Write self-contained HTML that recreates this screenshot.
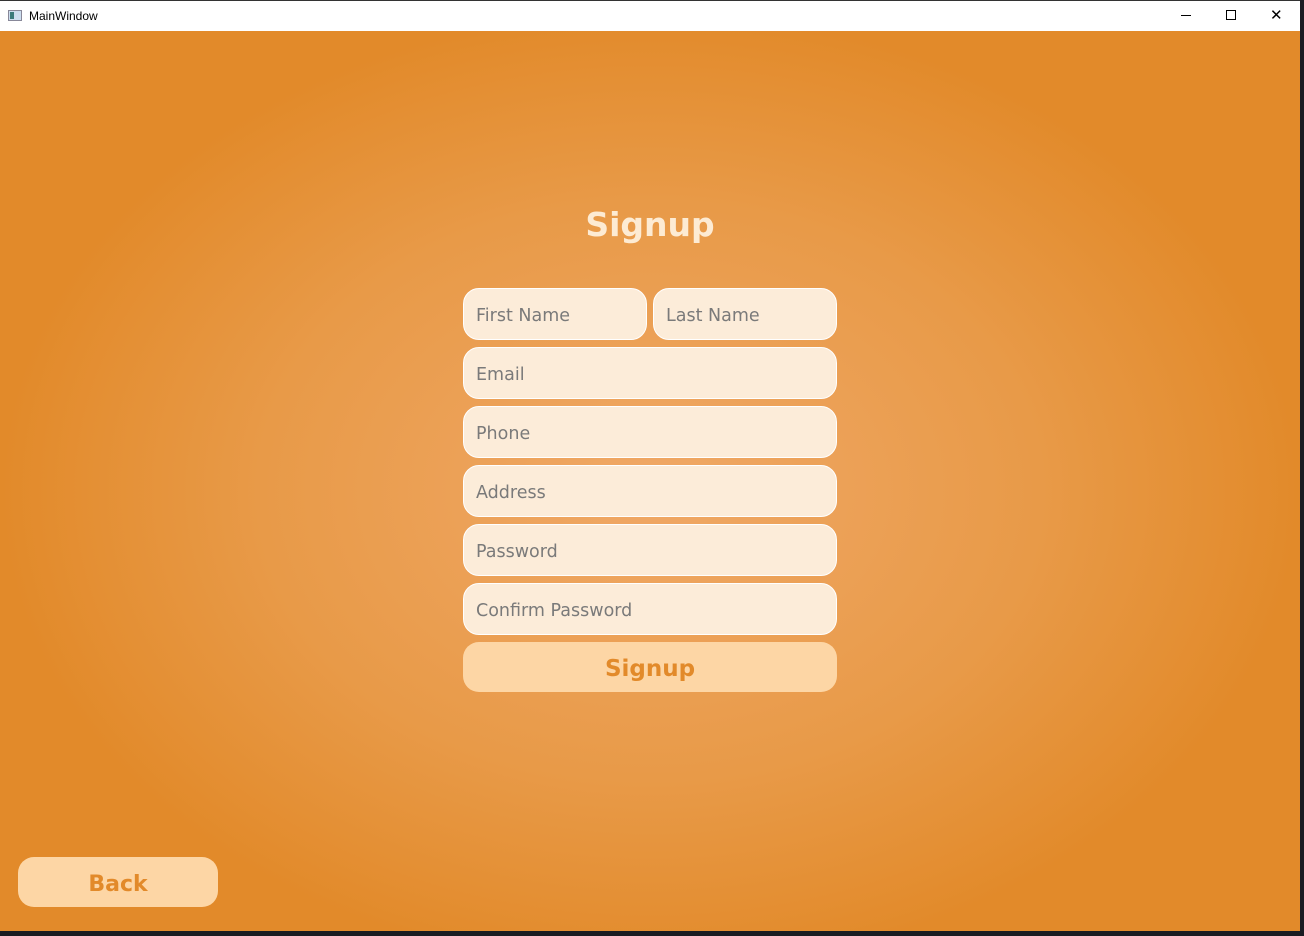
<!DOCTYPE html>
<html><head><meta charset="utf-8"><style>
*{margin:0;padding:0;box-sizing:border-box}
body{width:1304px;height:936px;background:#1a1c22;position:relative;overflow:hidden;font-family:"Liberation Sans",sans-serif}
#win{position:absolute;left:0;top:0;width:1300px;height:931px;background:#fff;border-top:1px solid #333}
#title{position:absolute;left:0;top:0;width:1300px;height:30px;background:#fff;font-size:12px}
#title .t{position:absolute;left:29px;top:8px;color:#000}
#title .ic{position:absolute;left:8px;top:9px;width:14px;height:11px;border:1px solid #889;background:#cde}
#title .ic:before{content:"";position:absolute;left:1px;top:1px;width:4px;height:7px;background:#3a7a7a}
#content{position:absolute;left:0;top:30px;width:1300px;height:900px;background:radial-gradient(ellipse 650px 480px at 650px 460px,#f0a866 0%,#e89a48 60%,#e28a2a 100%)}
.f{position:absolute;height:52px;background:#fcecd9;border:1px solid #fff;border-radius:16px;color:#7a7a7a;padding-left:12px;line-height:55px;font-family:"DejaVu Sans",sans-serif;font-size:17.5px}
.b{position:absolute;background:#fdd6a5;border-radius:16px;color:#e28a2a;font-weight:bold;text-align:center;font-family:"DejaVu Sans",sans-serif}
h1{position:absolute;left:0;width:1300px;text-align:center;top:174px;color:#fdebd3;font-size:33px;font-family:"DejaVu Sans",sans-serif}
</style></head><body>
<div id="win">
<div id="title"><div class="ic"></div><span class="t">MainWindow</span>
<span style="position:absolute;left:1181px;top:14px;width:10px;height:1px;background:#000"></span>
<span style="position:absolute;left:1226px;top:9px;width:10px;height:10px;border:1px solid #000"></span>
<span style="position:absolute;left:1270px;top:5px;font-size:15px;color:#000">✕</span>
</div>
<div id="content">
<h1>Signup</h1>
<div class="f" style="left:463px;top:257px;width:184px">First Name</div>
<div class="f" style="left:653px;top:257px;width:184px">Last Name</div>
<div class="f" style="left:463px;top:316px;width:374px">Email</div>
<div class="f" style="left:463px;top:375px;width:374px">Phone</div>
<div class="f" style="left:463px;top:434px;width:374px">Address</div>
<div class="f" style="left:463px;top:493px;width:374px">Password</div>
<div class="f" style="left:463px;top:552px;width:374px">Confirm Password</div>
<div class="b" style="left:463px;top:611px;width:374px;height:50px;line-height:54px;font-size:23px">Signup</div>
<div class="b" style="left:18px;top:826px;width:200px;height:50px;line-height:55px;font-size:22px">Back</div>
</div>
</div>
</body></html>
